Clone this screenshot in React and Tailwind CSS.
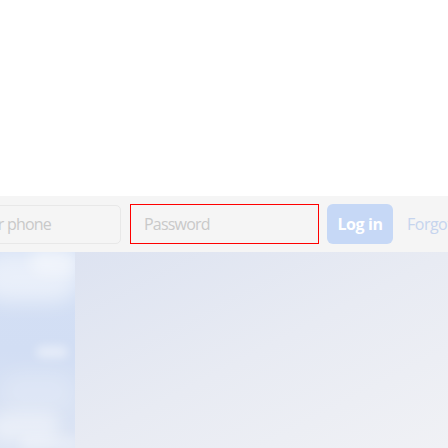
import React from 'react';

function SkyStrip() {
  return (
    <div className="relative w-[75px] h-full overflow-hidden bg-gradient-to-b from-[#d4e0f5] via-[#d2def4] to-[#dde5f4]">
      <div className="absolute -left-[20px] top-[0px] w-[100px] h-[50px] rounded-full bg-white/50 blur-[10px]" />
      <div className="absolute left-[30px] top-[-4px] w-[50px] h-[26px] rounded-full bg-white/40 blur-[7px]" />
      <div className="absolute left-[36px] top-[94px] w-[32px] h-[12px] rounded-full bg-white/45 blur-[5px]" />
      <div className="absolute left-[0px] top-[120px] w-[75px] h-[40px] rounded-full bg-white/20 blur-[10px]" />
      <div className="absolute -left-[10px] top-[160px] w-[70px] h-[30px] rounded-full bg-white/40 blur-[8px]" />
      <div className="absolute left-[20px] top-[184px] w-[60px] h-[16px] rounded-full bg-white/30 blur-[6px]" />
    </div>
  );
}

export default function App() {
  const font = { fontFamily: '"Open Sans", "Liberation Sans", sans-serif' };
  return (
    <div className="w-[448px] h-[448px] overflow-hidden bg-white flex flex-col" style={font}>
      <div className="h-[196px] bg-white" />
      <div className="h-[56px] bg-[#f5f5f5] flex items-center gap-[9px]">
        <div className="-ml-[66px] w-[187px] h-[39px] shrink-0 border border-[#e8e8e8] rounded-[5px] flex items-center pl-[14px] text-[16px] tracking-[-0.8px] text-[#c9c9c9] whitespace-nowrap">
          Email or phone
        </div>
        <div className="w-[189px] h-[40px] shrink-0 border border-[#ff0000] flex items-center pl-[13px] text-[16px] tracking-[-0.8px] text-[#c9c9c9]">
          Password
        </div>
        <div className="ml-[-1px] w-[66px] h-[40px] shrink-0 rounded-[6px] bg-[#c6d8f6] flex items-center justify-center text-white font-bold text-[16px] tracking-[-0.4px]">
          Log in
        </div>
        <div className="ml-[5px] shrink-0 text-[16px] tracking-[-0.5px] text-[#c6d4ee] whitespace-nowrap">
          Forgotten password?
        </div>
      </div>
      <div className="flex-1 flex">
        <SkyStrip />
        <div className="flex-1 bg-gradient-to-br from-[#dde3f1] via-[#e8ebf3] to-[#f0f1f5]" />
      </div>
    </div>
  );
}
